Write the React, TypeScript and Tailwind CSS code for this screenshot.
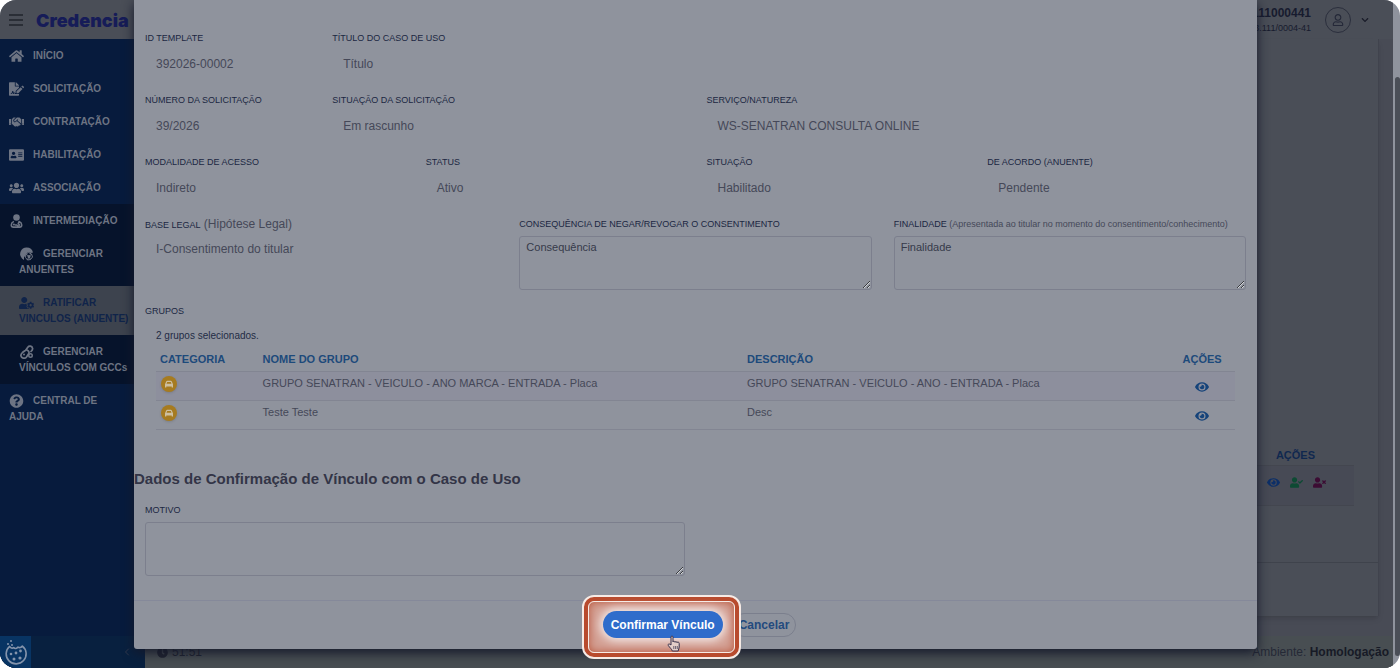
import type { ReactNode } from 'react';
import type { IconType } from 'react-icons';
import {
  FaAddressCard,
  FaChevronDown,
  FaClock,
  FaEye,
  FaFileSignature,
  FaHandshake,
  FaHome,
  FaQuestionCircle,
  FaRegUser,
  FaUserCheck,
  FaUserCog,
  FaUserTimes,
  FaUsers,
} from 'react-icons/fa';
import { LuChevronLeft } from 'react-icons/lu';

type MenuItem = {
  icon: IconType;
  lines: string[];
  active?: boolean;
};

const mainItems: MenuItem[] = [
  { icon: FaHome, lines: ['INÍCIO'] },
  { icon: FaFileSignature, lines: ['SOLICITAÇÃO'] },
  { icon: FaHandshake, lines: ['CONTRATAÇÃO'] },
  { icon: FaAddressCard, lines: ['HABILITAÇÃO'] },
  { icon: FaUsers, lines: ['ASSOCIAÇÃO'] },
];

const subItems: MenuItem[] = [
  { icon: GroupBadgeIcon, lines: ['GERENCIAR', 'ANUENTES'] },
  { icon: FaUserCog, lines: ['RATIFICAR', 'VINCULOS (ANUENTE)'], active: true },
  { icon: LinkGearIcon, lines: ['GERENCIAR', 'VÍNCULOS COM GCCs'] },
];

const groups = [
  {
    name: 'GRUPO SENATRAN - VEICULO - ANO MARCA - ENTRADA - Placa',
    description: 'GRUPO SENATRAN - VEICULO - ANO - ENTRADA - Placa',
  },
  { name: 'Teste Teste', description: 'Desc' },
];

function GroupBadgeIcon({ className }: { className?: string }) {
  return (
    <svg viewBox="0 0 28 28" className={className} fill="none" aria-hidden="true">
      <path d="M14 1a13 13 0 0 0-9 22l4 3v-6l3-2 1-5 5-3 5 2 4-1A13 13 0 0 0 14 1Z" fill="currentColor" />
      <path d="M13 14l5-3 6 3 2 6-4 5-6 1-4-5 1-7Zm0 0 6 5 5-5m-5 5-3 7m3-7 3 6" stroke="currentColor" strokeWidth="2" />
      <circle cx="19" cy="19" r="3" fill="currentColor" />
    </svg>
  );
}

function PersonHandIcon({ className }: { className?: string }) {
  return (
    <svg viewBox="0 0 28 32" className={className} fill="none" aria-hidden="true">
      <circle cx="14" cy="8" r="7.5" fill="currentColor" />
      <path
        d="M8 17c-4 2-6 4-6 8 0 3 2 5 5 5h14c3 0 5-2 5-5 0-4-2-6-6-8l-2 5 3 3-3 3-4-3h-4"
        stroke="currentColor"
        strokeWidth="3.5"
        strokeLinejoin="round"
      />
      <circle cx="8" cy="24" r="2.5" fill="currentColor" />
    </svg>
  );
}

function LinkGearIcon({ className }: { className?: string }) {
  return (
    <svg viewBox="0 0 28 28" className={className} fill="none" aria-hidden="true">
      <path
        d="M12 11l5-7c2-3 8-2 9 2 1 3-1 5-3 7M15 10c4 2 5 5 3 8l-4 6c-3 4-10 3-11-2-1-3 1-5 3-7l4-3"
        stroke="currentColor"
        strokeWidth="3.5"
        strokeLinecap="round"
      />
      <circle cx="22" cy="21" r="3.5" stroke="currentColor" strokeWidth="3" />
      <circle cx="9" cy="19" r="2" fill="currentColor" />
    </svg>
  );
}

function CookieIcon() {
  return (
    <svg viewBox="0 0 24 28" className="h-7 w-6" fill="none" stroke="currentColor" aria-hidden="true">
      <path
        d="M12 6a10 10 0 1 0 10 8c-2 .6-3.600-.4-4-2-2 .4-3.600-.6-3.600-2.400C12.600 9.400 11.600 8 12 6Z"
        strokeWidth="1.6"
        strokeLinejoin="round"
        transform="rotate(-40 12 16)"
      />
      <g fill="currentColor" stroke="none">
        <circle cx="7" cy="16" r="1.3" />
        <circle cx="12" cy="15" r="1.4" />
        <circle cx="16.500" cy="13" r="1.4" />
        <circle cx="10" cy="21" r="1.5" />
        <circle cx="16" cy="20" r="1.6" />
        <circle cx="4" cy="6" r="1" />
        <circle cx="7" cy="3" r="1" />
        <circle cx="8" cy="7" r="1" />
      </g>
    </svg>
  );
}

function CarIcon() {
  return (
    <svg viewBox="0 0 10 8" className="h-2 w-[10px]" fill="currentColor" aria-hidden="true">
      <path d="M1 7.500V4.200L2.200 1.500Q2.500.8 3.300.8h3.400q.8 0 1.100.7L9 4.200v3.300H7.700V6.500H2.300v1Z" />
      <path d="M2.500 3.700 3.200 2h3.600l.7 1.700Z" fill="#a67b20" />
    </svg>
  );
}

function MenuLink({ item, sub }: { item: MenuItem; sub?: boolean }) {
  const Icon = item.icon;
  return (
    <a
      href="#"
      className={`block whitespace-nowrap pt-[9px] pb-2 text-[10px] leading-4 font-bold ${sub ? 'pl-[19px]' : 'pl-[9px]'} ${
        item.active ? 'bg-[#3d434e] text-[#10244a]' : 'text-[#6d7483]'
      }`}
    >
      <span className="flex items-center">
        <Icon className="mr-[9px] h-[14px] w-[15px]" />
        {item.lines[0]}
      </span>
      {item.lines[1] && <span className="block">{item.lines[1]}</span>}
    </a>
  );
}

function Sidebar() {
  return (
    <nav className="flex w-[145px] shrink-0 flex-col bg-[#071b3d]">
      {mainItems.map((item) => (
        <MenuLink key={item.lines[0]} item={item} />
      ))}
      <div className="bg-[#06132b]">
        <MenuLink item={{ icon: PersonHandIcon, lines: ['INTERMEDIAÇÃO'] }} />
        {subItems.map((item) => (
          <MenuLink key={item.lines[1]} item={item} sub />
        ))}
      </div>
      <MenuLink item={{ icon: FaQuestionCircle, lines: ['CENTRAL DE', 'AJUDA'] }} />
      <div className="mt-auto flex h-8 items-center justify-between bg-[#08203f] pr-3">
        <button type="button" aria-label="Cookies" className="flex h-8 w-[31px] items-center justify-center bg-[#083463] text-[#8393ab]">
          <CookieIcon />
        </button>
        <button type="button" aria-label="Recolher menu" className="text-[#30384c]">
          <LuChevronLeft className="size-3" />
        </button>
      </div>
    </nav>
  );
}

function Header() {
  return (
    <header className="flex h-[39px] items-center bg-[#4a4e57] pr-6 pl-[9px]">
      <button type="button" aria-label="Menu" className="text-[#20242d]">
        <svg viewBox="0 0 14 12" className="h-3 w-[14px]" stroke="currentColor" strokeWidth="1.4" aria-hidden="true">
          <path d="M0 1h14M0 6h14M0 11h14" />
        </svg>
      </button>
      <span className="ml-[13px] pt-[2px] font-[Inter] text-[18px] font-black text-[#161c58]">Credencia</span>
      <div className="ml-auto text-right text-[#171b2e]">
        <p className="text-xs leading-4 font-bold">11.111.111000441</p>
        <p className="text-[9px] leading-[14px]">03.113.111/0004-41</p>
      </div>
      <button type="button" aria-label="Usuário" className="ml-[14px] flex size-[26px] items-center justify-center rounded-full border border-[#2b2f3d] text-[#242838]">
        <FaRegUser className="size-3" />
      </button>
      <button type="button" aria-label="Abrir menu do usuário" className="ml-[10px] text-[#1a1d2a]">
        <FaChevronDown className="size-2" />
      </button>
    </header>
  );
}

function Background() {
  return (
    <main className="flex flex-1 flex-col bg-[#484b55]">
      <div className="flex-1 pr-[14px] pb-5">
        <section className="flex h-full flex-col border-r border-[#40434d] bg-[#4a4e57] pt-[407px] shadow-md">
          <table className="mr-6 text-[11px]">
            <thead>
              <tr>
                <th className="h-[19px] pr-[39px] text-right text-[#10284f]">AÇÕES</th>
              </tr>
            </thead>
            <tbody>
              <tr className="border-y border-[#43464f] bg-[#474a55]">
                <td className="h-10 pr-7 pb-[6px]">
                  <div className="flex justify-end gap-[10px]">
                    <FaEye className="size-[13px] text-[#0c2f68]" />
                    <FaUserCheck className="size-[13px] text-[#0d4a33]" />
                    <FaUserTimes className="size-[13px] text-[#3c0c33]" />
                  </div>
                </td>
              </tr>
            </tbody>
          </table>
          <hr className="mt-14 border-[#3f434c]" />
        </section>
      </div>
      <footer className="flex h-8 items-center justify-between bg-[#484e52] pr-1 pl-3 text-xs text-[#20232f]">
        <span className="flex items-center gap-1">
          <FaClock className="size-[11px]" />
          51:51
        </span>
        <span className="text-[#252936]">
          Ambiente: <strong className="text-[#171a26]">Homologação</strong>
        </span>
      </footer>
    </main>
  );
}

function Field({ label, className, children }: { label: string; className: string; children: ReactNode }) {
  return (
    <div className={`px-[11px] ${className}`}>
      <p className="text-[9px] leading-[14px] text-[#1b2742]">{label}</p>
      <p className="mt-[7px] pl-[11px] text-xs leading-6">{children}</p>
    </div>
  );
}

const textareaClass =
  'mt-[5px] block h-[54px] w-full rounded-[3px] border border-[#7c7f8d] px-[6px] py-[2px] text-[11px] leading-4 text-[#363a4a]';

function GroupsTable() {
  return (
    <table className="mt-[3px] w-full table-fixed text-left text-[11px] leading-4">
      <thead>
        <tr className="text-[#1d4a7b]">
          <th className="h-6 w-[9.6%] pl-1">CATEGORIA</th>
          <th className="w-[44.9%] pl-[3px]">NOME DO GRUPO</th>
          <th className="w-[39.4%] pl-[3px]">DESCRIÇÃO</th>
          <th className="text-center">AÇÕES</th>
        </tr>
      </thead>
      <tbody>
        {groups.map((group) => (
          <tr key={group.name} className="h-[29px] border-y border-[#828592] align-top odd:bg-[#8d8f9d]">
            <td className="pt-1 pl-[5px]">
              <span className="flex size-4 items-center justify-center rounded-full bg-[#a67b20] text-[#cdbf9f] shadow">
                <CarIcon />
              </span>
            </td>
            <td className="pt-[3px] pl-[3px]">{group.name}</td>
            <td className="pt-[3px] pl-[3px]">{group.description}</td>
            <td className="text-center align-middle">
              <button type="button" aria-label="Visualizar" className="pt-[2px] align-middle text-[#15437a]">
                <FaEye className="size-[14px]" />
              </button>
            </td>
          </tr>
        ))}
      </tbody>
    </table>
  );
}

function HandCursor() {
  return (
    <svg viewBox="0 0 14 17" className="absolute top-6 left-16 h-[17px] w-[14px]" aria-hidden="true">
      <path
        d="M4 10V2.2c0-1.6 2-1.6 2 0V7c0-1 2-1 2 .3 0-1 2-1 2 .4 0-.9 2.2-.9 2.2.6V12c0 1.6-.9 2.3-1 4H5.300C5 14.300 2.600 12.500 1.300 10.500 0.600 9.200 2 8.200 4 10Z"
        fill="#e3cdc8"
        stroke="#38304a"
        strokeWidth="1"
        strokeLinejoin="round"
      />
      <path d="M6.800 11v3M8.600 11v3M10.300 11v3" stroke="#38304a" strokeWidth="0.700" />
    </svg>
  );
}

function ModalFooter() {
  return (
    <div className="mt-6 flex h-[49px] items-center justify-center gap-[9px] border-t border-[#85899a] pl-2">
      <div className="relative z-10">
        {/* spotlight around the primary action */}
        <div className="absolute -top-4 -right-[18px] -bottom-[21px] -left-[21px] rounded-xl border-2 border-[#f6ebe6] bg-[#b84b2e] p-1">
          <div className="h-full rounded-md border border-[#f6ebe6] bg-[#d3a094] shadow-[inset_0_0_9px_#b9573d]" />
        </div>
        <button
          type="button"
          className="relative h-[27px] rounded-full bg-[#2f6ccb] px-2 text-xs font-bold text-white shadow-[0_0_10px_3px_#f3ebea]"
        >
          Confirmar Vínculo
        </button>
        <HandCursor />
      </div>
      <button type="button" className="h-6 rounded-full border border-[#7b7f8d] px-[6px] text-xs font-bold text-[#234a7e]">
        Cancelar
      </button>
    </div>
  );
}

function LinkModal() {
  return (
    <div
      role="dialog"
      aria-label="Confirmação de vínculo"
      className="rounded-b-[3px] bg-[#8f939d] pt-[31px] text-[#454858] shadow-[0_4px_12px_#14182a]"
    >
      <div className="grid grid-cols-12 gap-y-[17px]">
        <Field label="ID TEMPLATE" className="col-span-2">392026-00002</Field>
        <Field label="TÍTULO DO CASO DE USO" className="col-span-10">Título</Field>
        <Field label="NÚMERO DA SOLICITAÇÃO" className="col-span-2">39/2026</Field>
        <Field label="SITUAÇÃO DA SOLICITAÇÃO" className="col-span-4">Em rascunho</Field>
        <Field label="SERVIÇO/NATUREZA" className="col-span-6">WS-SENATRAN CONSULTA ONLINE</Field>
        <Field label="MODALIDADE DE ACESSO" className="col-span-3">Indireto</Field>
        <Field label="STATUS" className="col-span-3">Ativo</Field>
        <Field label="SITUAÇÃO" className="col-span-3">Habilitado</Field>
        <Field label="DE ACORDO (ANUENTE)" className="col-span-3">Pendente</Field>
        <div className="col-span-4 px-[11px] text-xs">
          <p className="leading-[14px]">
            <span className="text-[9px] text-[#1b2742]">BASE LEGAL</span> (Hipótese Legal)
          </p>
          <p className="mt-[5px] pl-[11px] leading-6">I-Consentimento do titular</p>
        </div>
        <div className="col-span-4 px-[11px]">
          <label htmlFor="consequencia" className="block text-[9px] leading-[14px] text-[#1b2742]">
            CONSEQUÊNCIA DE NEGAR/REVOGAR O CONSENTIMENTO
          </label>
          <textarea id="consequencia" className={textareaClass} defaultValue="Consequência" />
        </div>
        <div className="col-span-4 px-[11px]">
          <label htmlFor="finalidade" className="block text-[9px] leading-[14px] whitespace-nowrap text-[#1b2742]">
            FINALIDADE{' '}
            <span className="text-[#454858]">
              (Apresentada ao titular no momento do consentimento/conhecimento)
            </span>
          </label>
          <textarea id="finalidade" className={textareaClass} defaultValue="Finalidade" />
        </div>
      </div>

      <section className="mt-[14px] px-[11px]">
        <p className="text-[9px] leading-[14px] text-[#1b2742]">GRUPOS</p>
        <div className="mt-[10px] px-[11px]">
          <p className="text-[10px] leading-4 text-[#232c45]">2 grupos selecionados.</p>
          <GroupsTable />
        </div>
      </section>

      <h2 className="mt-[37px] text-[15px] leading-6 font-bold text-[#333547]">
        Dados de Confirmação de Vínculo com o Caso de Uso
      </h2>
      <div className="mt-3 w-1/2 px-[11px]">
        <label htmlFor="motivo" className="block text-[9px] leading-[14px] text-[#1b2742]">MOTIVO</label>
        <textarea id="motivo" className={textareaClass} />
      </div>
      <ModalFooter />
    </div>
  );
}

export default function App() {
  return (
    <div className="flex min-h-screen overflow-hidden rounded-2xl bg-[#8f939d] font-['Liberation_Sans',Arial,sans-serif]">
      <div className="relative flex flex-1 flex-col">
        <Header />
        <div className="flex flex-1">
          <Sidebar />
          <Background />
        </div>
        <div className="absolute inset-x-0 top-0 pr-[136px] pl-[134px]">
          <LinkModal />
        </div>
      </div>
      <div className="flex w-[7px] pt-[77px] pb-3 pl-[2px]">
        <div className="w-full rounded-full bg-[#4a4e57]" />
      </div>
    </div>
  );
}
